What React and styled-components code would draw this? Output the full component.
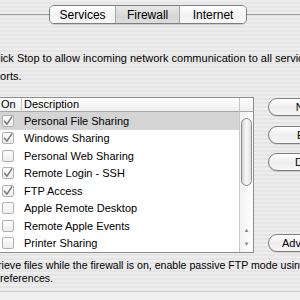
import React from "react";
import styled, { createGlobalStyle } from "styled-components";

const Global = createGlobalStyle`
  html, body { margin: 0; padding: 0; }
  body {
    width: 300px; height: 300px; overflow: hidden;
    font-family: "Liberation Sans", Arial, sans-serif;
    color: #000;
  }
`;

const Page = styled.div`
  width: 300px;
  height: 300px;
  overflow: hidden;
  background: repeating-linear-gradient(
    to bottom,
    #ededed 0px,
    #ededed 2px,
    #e5e5e5 2px,
    #e5e5e5 4px
  );
  display: flex;
  flex-direction: column;
`;

const TabBar = styled.div`
  display: flex;
  align-items: center;
  height: 19px;
  margin-top: 5px;
  flex: none;
`;

const TabLine = styled.div`
  flex: ${(p) => p.$grow || 1};
  height: 1px;
  background: #9a9a9a;
`;

const Segmented = styled.div`
  display: flex;
  height: 19px;
  border: 1px solid #7d7d7d;
  border-radius: 5px;
  overflow: hidden;
  box-sizing: border-box;
  box-shadow: 0 1px 1px rgba(0, 0, 0, 0.15);
`;

const Segment = styled.div`
  width: ${(p) => p.$w}px;
  display: flex;
  align-items: center;
  justify-content: center;
  font-size: 12px;
  background: ${(p) =>
    p.$active
      ? "linear-gradient(to bottom, #e9e9e9, #d6d6d6 60%, #dedede)"
      : "linear-gradient(to bottom, #ffffff, #f1f1f1 55%, #f7f7f7)"};
  & + & {
    border-left: 1px solid #a8a8a8;
  }
`;

const Para = styled.p`
  margin: ${(p) => p.$mt}px 0 0 ${(p) => p.$ml}px;
  text-indent: ${(p) => p.$indent}px;
  font-size: ${(p) => p.$fs}px;
  line-height: ${(p) => p.$lh}px;
  white-space: nowrap;
  flex: none;
`;

const Main = styled.div`
  display: flex;
  margin-top: 12px;
  margin-left: -6px;
  flex: none;
`;

const Table = styled.div`
  width: 258px;
  flex: none;
  border: 1px solid #8e8e8e;
  background: #fff;
  display: grid;
  grid-template-columns: 1fr 14px;
  grid-template-rows: 14px 140px;
`;

const Header = styled.div`
  display: flex;
  background: linear-gradient(to bottom, #ffffff, #efefef);
  border-bottom: 1px solid #a9a9a9;
  box-sizing: border-box;
  font-size: 11px;
  line-height: 12px;
`;

const HeadCell = styled.div`
  width: ${(p) => (p.$w ? p.$w + "px" : "auto")};
  flex: ${(p) => (p.$w ? "none" : 1)};
  padding-left: ${(p) => p.$pl}px;
  box-sizing: border-box;
  & + & {
    border-left: 1px solid #c4c4c4;
  }
`;

const Corner = styled.div`
  background: linear-gradient(to bottom, #ffffff, #efefef);
  border-bottom: 1px solid #a9a9a9;
  border-left: 1px solid #c4c4c4;
  box-sizing: border-box;
`;

const Body = styled.div`
  display: flex;
  flex-direction: column;
`;

const Row = styled.div`
  height: 17.5px;
  display: flex;
  align-items: center;
  background: ${(p) => (p.$sel ? "#d4d4d4" : "#fff")};
  font-size: 11px;
`;

const CheckCell = styled.div`
  width: 26px;
  display: flex;
  justify-content: center;
  flex: none;
`;

const Box = styled.div`
  width: 12px;
  height: 12px;
  margin-left: -1px;
  box-sizing: border-box;
  border: 1px solid #b0b0b0;
  border-radius: 2px;
  background: linear-gradient(to bottom, #fdfdfd, #ededed);
  display: flex;
  align-items: center;
  justify-content: center;
`;

const Label = styled.div`
  padding-left: 3px;
`;

const Scroll = styled.div`
  border-left: 1px solid #c8c8c8;
  background: linear-gradient(to right, #f2f2f2, #ffffff);
  display: flex;
  flex-direction: column;
  align-items: center;
  padding-top: 6px;
  box-sizing: border-box;
`;

const Thumb = styled.div`
  width: 11px;
  height: 68px;
  box-sizing: border-box;
  border: 1px solid #8c8c8c;
  border-radius: 6px;
  background: linear-gradient(to right, #d0d0d0, #fafafa 45%, #e0e0e0);
`;

const Arrows = styled.div`
  margin-top: auto;
  display: flex;
  flex-direction: column;
  align-items: center;
  gap: 8px;
  padding-bottom: 5px;
  font-size: 6px;
  color: #8a8a8a;
  line-height: 6px;
`;

const Buttons = styled.div`
  margin-left: 14px;
  display: flex;
  flex-direction: column;
  flex: none;
  padding-top: 1px;
`;

const Btn = styled.div`
  width: 86px;
  height: 18px;
  box-sizing: border-box;
  border: 1px solid #7e7e7e;
  border-radius: 9px;
  background: linear-gradient(to bottom, #ffffff, #eeeeee 50%, #f6f6f6);
  display: flex;
  align-items: center;
  justify-content: center;
  font-size: 11px;
  margin-top: ${(p) => p.$mt || 0}px;
  box-shadow: 0 1px 1px rgba(0, 0, 0, 0.12);
`;

const Footer = styled.div`
  margin-top: auto;
  height: 8px;
  border-top: 1px solid #d0d0d0;
  background: #f0f0f0;
`;

const Check = () => (
  <svg width="10" height="10" viewBox="0 0 10 10">
    <path d="M1.5 5.2 L4 8.2 L8.8 0.8" fill="none" stroke="#7a7a7a" strokeWidth="1.5" strokeLinecap="round" strokeLinejoin="round" />
  </svg>
);

const rows = [
  ["Personal File Sharing", true, true],
  ["Windows Sharing", true],
  ["Personal Web Sharing", false],
  ["Remote Login - SSH", true],
  ["FTP Access", true],
  ["Apple Remote Desktop", false],
  ["Remote Apple Events", false],
  ["Printer Sharing", false],
];

export default function App() {
  return (
    <>
      <Global />
      <Page>
        <TabBar>
          <TabLine $grow={51} />
          <Segmented>
            <Segment $w={65}>Services</Segment>
            <Segment $w={63} $active>Firewall</Segment>
            <Segment $w={66}>Internet</Segment>
          </Segmented>
          <TabLine $grow={55} />
        </TabBar>
        <Para $mt={25} $ml={-6} $indent={-4} $lh={18} $fs={11}>
          Click Stop to allow incoming network communication to all services and
          <br />
          ports.
        </Para>
        <Main>
          <Table>
            <Header>
              <HeadCell $w={26} $pl={6}>On</HeadCell>
              <HeadCell $pl={2}>Description</HeadCell>
            </Header>
            <Corner />
            <Body>
              {rows.map(([label, on, sel]) => (
                <Row key={label} $sel={sel}>
                  <CheckCell>
                    <Box>{on && <Check />}</Box>
                  </CheckCell>
                  <Label>{label}</Label>
                </Row>
              ))}
            </Body>
            <Scroll>
              <Thumb />
              <Arrows>
                <span>▲</span>
                <span>▼</span>
              </Arrows>
            </Scroll>
          </Table>
          <Buttons>
            <Btn>New...</Btn>
            <Btn $mt={10}>Edit...</Btn>
            <Btn $mt={9}>Delete</Btn>
            <Btn $mt={63}>Advanced...</Btn>
          </Buttons>
        </Main>
        <Para $mt={6} $ml={-7} $indent={-76} $lh={13} $fs={10.6}>
          To use FTP to retrieve files while the firewall is on, enable passive FTP mode using the Proxies tab in Network
          <br />
          Preferences.
        </Para>
        <Footer />
      </Page>
    </>
  );
}
